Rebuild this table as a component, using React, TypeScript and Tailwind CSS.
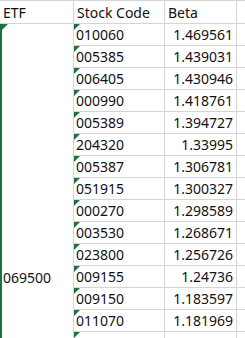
import React from "react";

const rows: [string, string][] = [
  ["010060", "1.469561"],
  ["005385", "1.439031"],
  ["006405", "1.430946"],
  ["000990", "1.418761"],
  ["005389", "1.394727"],
  ["204320", "1.33995"],
  ["005387", "1.306781"],
  ["051915", "1.300327"],
  ["000270", "1.298589"],
  ["003530", "1.268671"],
  ["023800", "1.256726"],
  ["009155", "1.24736"],
  ["009150", "1.183597"],
  ["011070", "1.181969"],
  ["", ""],
];

function Tri() {
  return (
    <svg width="6" height="6" viewBox="0 0 6 6" className="absolute left-0 top-0">
      <polygon points="0,0 6,0 0,6" fill="#1e7145" />
    </svg>
  );
}

export default function App() {
  return (
    <div
      className="w-[245px] h-[338px] overflow-hidden bg-white text-[14px] text-[#111]"
      style={{ fontFamily: '"Noto Sans", "Open Sans", sans-serif' }}
    >
      {/* header */}
      <div className="flex h-[24px] border-b border-t border-[#d4d4d4]">
        <div className="w-[74px] shrink-0 border-r border-[#d4d4d4] pl-[3px] pt-[2px] leading-[20px]">ETF</div>
        <div className="w-[91px] shrink-0 border-r border-[#d4d4d4] pl-[3px] pt-[2px] leading-[20px]">Stock Code</div>
        <div className="w-[72px] shrink-0 border-r border-[#d4d4d4] pl-[3px] pt-[2px] leading-[20px]">Beta</div>
        <div className="flex-1" />
      </div>
      <div className="flex">
        {/* merged ETF cell */}
        <div className="relative w-[74px] shrink-0 border-r border-[#d4d4d4] border-l-2 border-l-[#1f6e43]">
          <Tri />
          <div className="pl-[1px] pt-[243px] leading-[21px]">069500</div>
        </div>
        <div className="flex flex-col">
          {rows.map(([code, beta], i) => (
            <div key={i} className="flex h-[22px] border-b border-[#d4d4d4]">
              <div className="relative w-[91px] shrink-0 border-r border-[#d4d4d4] pl-[2px] leading-[21px]">
                <Tri />
                {code}
              </div>
              <div className="w-[72px] shrink-0 border-r border-[#d4d4d4] pr-[3px] text-right leading-[21px]">
                {beta}
              </div>
              <div className="w-[8px]" />
            </div>
          ))}
        </div>
      </div>
    </div>
  );
}
